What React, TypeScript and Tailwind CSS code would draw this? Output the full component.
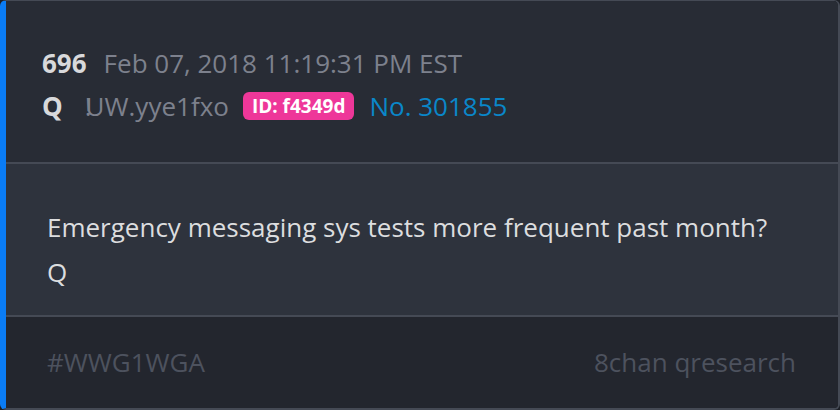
import { FC } from "react";

const App: FC = () => {
  return (
    <div className="w-[840px] h-[410px] bg-[#1d2027] font-['Open_Sans',sans-serif]">
      <div className="flex flex-col h-full overflow-hidden rounded-md border-t border-r-2 border-b-2 border-[#454a55] border-l-[6px] border-l-[#0a7cf5]">
        <div className="h-[161px] bg-[#282c35] pl-[36px] pt-[41px] text-[26px]">
          <div className="flex items-center h-[42px]">
            <span className="font-bold text-[#d8d9db]">696</span>
            <span className="ml-[17px] text-[#7d818d]">Feb 07, 2018 11:19:31 PM EST</span>
          </div>
          <div className="flex items-center h-[44px]">
            <span className="font-bold text-[#d8d9db]">Q</span>
            <span className="ml-[22px] text-[#7d818d]">
              <span className="mr-[-6px]">!</span>UW.yye1fxo
            </span>
            <span className="ml-[14px] rounded-md bg-[#ee3799] px-[9px] h-[28px] flex items-center text-[19px] font-bold text-white">
              ID: f4349d
            </span>
            <span className="ml-[15px] text-[#0a87c9]">No. 301855</span>
          </div>
        </div>
        <div className="h-[153px] border-t-2 border-[#454a55] bg-[#2e333d] pl-[41px] pt-[41px] text-[26px] leading-[45px] text-[#dcdddf]">
          <p>Emergency messaging sys tests more frequent past month?</p>
          <p>Q</p>
        </div>
        <div className="flex flex-1 items-center justify-between border-t-2 border-[#454a55] bg-[#23262e] pl-[41px] pr-[42px] text-[26px] text-[#4d525e]">
          <span>#WWG1WGA</span>
          <span>8chan qresearch</span>
        </div>
      </div>
    </div>
  );
};

export default App;
